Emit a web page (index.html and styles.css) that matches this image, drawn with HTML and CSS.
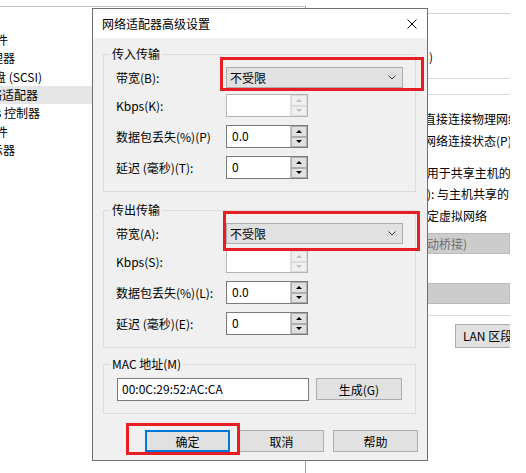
FILE: index.html
```html
<!DOCTYPE html>
<html lang="zh-CN">
<head>
  <meta charset="UTF-8" />
  <title>网络适配器高级设置</title>
  <link rel="stylesheet" href="styles.css">
</head>
<body>
  <div class="app">
    <div class="tree-pane">
      <div class="tree-row end-8"><span>文件</span></div>
      <div class="tree-row end-15"><span>处理器</span></div>
      <div class="tree-row end-42"><span>硬盘 (SCSI)</span></div>
      <div class="tree-row end-38 is-selected"><span>网络适配器</span></div>
      <div class="tree-row end-40"><i class="usb-icon"></i><span>USB 控制器</span></div>
      <div class="tree-row end-8"><span>软件</span></div>
      <div class="tree-row end-15"><span>显示器</span></div>
    </div>

    <div class="settings-pane">
      <div class="pane-text first">)</div>
      <div class="pane-line line-a"></div>
      <div class="pane-line line-b"></div>
      <div class="pane-text t-bridge">直接连接物理网络</div>
      <div class="pane-text t-state">网络连接状态(P)</div>
      <div class="pane-text t-nat">&nbsp;用于共享主机的</div>
      <div class="pane-text t-host">): 与主机共享的</div>
      <div class="pane-text t-custom">定虚拟网络</div>
      <div class="pane-combo">动桥接)</div>
      <div class="pane-combo empty"></div>
      <div class="pane-line line-c"></div>
      <div class="pane-btn">LAN 区段(L)...</div>
    </div>
  </div>

  <div class="dialog">
    <div class="titlebar">
      <span>网络适配器高级设置</span>
      <svg class="close" width="10" height="10" viewBox="0 0 10 10">
        <path d="M0.5 0.5 L9.5 9.5 M9.5 0.5 L0.5 9.5" stroke="#000" stroke-width="1" fill="none"/>
      </svg>
    </div>

    <div class="dialog-body">
      <fieldset class="group">
        <legend>传入传输</legend>
        <div class="field field-combo">
          <label>带宽(B):</label>
          <div class="combo"><span>不受限</span>
            <svg width="8" height="5" viewBox="0 0 8 5"><path d="M0.5 0.5 L4 4 L7.5 0.5" stroke="#333" fill="none"/></svg>
          </div>
        </div>
        <div class="field">
          <label>Kbps(K):</label>
          <div class="spin is-disabled">
            <div class="spin-input"></div>
            <div class="spin-btns"><div class="spin-btn"><i class="arr-up"></i></div><div class="spin-btn"><i class="arr-down"></i></div></div>
          </div>
        </div>
        <div class="field">
          <label>数据包丢失(%)(P)</label>
          <div class="spin">
            <div class="spin-input">0.0</div>
            <div class="spin-btns"><div class="spin-btn"><i class="arr-up"></i></div><div class="spin-btn"><i class="arr-down"></i></div></div>
          </div>
        </div>
        <div class="field">
          <label>延迟 (毫秒)(T):</label>
          <div class="spin">
            <div class="spin-input">0</div>
            <div class="spin-btns"><div class="spin-btn"><i class="arr-up"></i></div><div class="spin-btn"><i class="arr-down"></i></div></div>
          </div>
        </div>
      </fieldset>

      <fieldset class="group group-out">
        <legend>传出传输</legend>
        <div class="field field-combo">
          <label>带宽(A):</label>
          <div class="combo"><span>不受限</span>
            <svg width="8" height="5" viewBox="0 0 8 5"><path d="M0.5 0.5 L4 4 L7.5 0.5" stroke="#333" fill="none"/></svg>
          </div>
        </div>
        <div class="field">
          <label>Kbps(S):</label>
          <div class="spin is-disabled">
            <div class="spin-input"></div>
            <div class="spin-btns"><div class="spin-btn"><i class="arr-up"></i></div><div class="spin-btn"><i class="arr-down"></i></div></div>
          </div>
        </div>
        <div class="field">
          <label>数据包丢失(%)(L):</label>
          <div class="spin">
            <div class="spin-input">0.0</div>
            <div class="spin-btns"><div class="spin-btn"><i class="arr-up"></i></div><div class="spin-btn"><i class="arr-down"></i></div></div>
          </div>
        </div>
        <div class="field">
          <label>延迟 (毫秒)(E):</label>
          <div class="spin">
            <div class="spin-input">0</div>
            <div class="spin-btns"><div class="spin-btn"><i class="arr-up"></i></div><div class="spin-btn"><i class="arr-down"></i></div></div>
          </div>
        </div>
      </fieldset>

      <fieldset class="group group-mac">
        <legend>MAC 地址(M)</legend>
        <div class="mac-row">
          <div class="mac-input">00:0C:29:52:AC:CA</div>
          <button class="btn btn-gen">生成(G)</button>
        </div>
      </fieldset>
    </div>

    <div class="dialog-buttons">
      <button class="btn btn-default">确定</button>
      <button class="btn">取消</button>
      <button class="btn">帮助</button>
    </div>
  </div>

  <div class="mark mark-in"></div>
  <div class="mark mark-out"></div>
  <div class="mark mark-ok"></div>
</body>
</html>
```

FILE: styles.css
```css
body {
  margin: 0;
  width: 526px;
  height: 473px;
  overflow: hidden;
  position: relative;
  background: #fff;
  color: #000;
  font-family: "Noto Sans CJK SC", "Liberation Sans", sans-serif;
  font-size: 12px;
  line-height: 16px;
}

/* background window */

.app {
  display: flex;
  height: 473px;
}

.tree-pane {
  width: 305px;
  margin-top: 6px;
  padding-top: 24px;
  border-top: 1px solid #c4c4c4;
  border-right: 1px solid #a0a0a0;
  overflow: hidden;
}

.tree-row {
  display: flex;
  justify-content: flex-end;
  align-items: center;
  height: 18.3px;
  white-space: nowrap;
}

.tree-row.is-selected {
  width: 305px !important;
  justify-content: flex-start;
  background: #e5e5e5;
}

.tree-row.is-selected span {
  margin-left: -22px;
}

.end-8 { width: 8px; }
.end-15 { width: 15px; }
.end-38 { width: 38px; }
.end-40 { width: 40px; }
.end-42 { width: 42px; }

.usb-icon {
  flex: none;
  width: 10px;
  height: 10px;
  margin-right: 2px;
  background: #3b9ee8;
  border-radius: 2px;
}

.settings-pane {
  width: 204px;
  margin-top: 13px;
  padding-left: 118px;
  box-sizing: border-box;
  border-top: 1px solid #d0d0d0;
  overflow: hidden;
}

.pane-text {
  white-space: nowrap;
  height: 16px;
}

.pane-text.first { margin-top: 35px; padding-left: 5px; }
.pane-line { height: 1px; background: #d9d9d9; }
.line-a { margin-top: 13px; }
.line-b { margin-top: 15px; }
.t-bridge { margin-top: 16px; }
.t-state { margin-top: 6px; }
.t-nat { margin-top: 16px; }
.t-host { margin-top: 5px; padding-left: 3px; }
.t-custom { margin-top: 6px; padding-left: 3px; }

.pane-combo {
  height: 21px;
  margin-top: 9px;
  padding-left: 2px;
  box-sizing: border-box;
  background: #cccccc;
  border: 1px solid #bcbcbc;
  color: #6d6d6d;
  white-space: nowrap;
  line-height: 19px;
}

.pane-combo.empty { margin-top: 29px; }
.line-c { margin-top: 11px; }

.pane-btn {
  margin: 8px 0 0 31px;
  height: 24px;
  padding-left: 7px;
  box-sizing: border-box;
  background: #e1e1e1;
  border: 1px solid #adadad;
  border-right: none;
  line-height: 22px;
  white-space: nowrap;
}

/* dialog */

.dialog {
  position: absolute;
  left: 92px;
  top: 8px;
  width: 336px;
  height: 453px;
  box-sizing: border-box;
  border: 1px solid #6f6f6f;
  background: #f0f0f0;
}

.titlebar {
  height: 29px;
  background: #fff;
  display: flex;
  align-items: center;
  justify-content: space-between;
  padding: 0 10px 0 9px;
}

.dialog-body {
  padding: 8px 0 0 10px;
}

.group {
  width: 313px;
  box-sizing: border-box;
  margin: 0;
  padding: 5px 11px 12px 12px;
  border: 1px solid #dcdcdc;
  min-width: 0;
}

.group legend {
  padding: 0 2px;
  margin-left: -6px;
  line-height: 16px;
}

.group-out { margin-top: 10px; }
.group-mac { margin-top: 8px; padding-top: 6px; }

.field {
  display: flex;
  align-items: center;
  height: 23px;
  margin-top: 8px;
}

.field-combo {
  height: 21px;
  margin-top: 0;
  margin-bottom: -2px;
}

.field label {
  width: 110px;
  flex: none;
  white-space: nowrap;
}

.combo {
  width: 177px;
  height: 21px;
  box-sizing: border-box;
  border: 1px solid #adadad;
  background: #e1e1e1;
  display: flex;
  align-items: center;
  justify-content: space-between;
  padding: 0 6px 0 3px;
}

.spin {
  display: flex;
  width: 82px;
  height: 23px;
  box-sizing: border-box;
  border: 1px solid #7a7a7a;
  background: #fff;
}

.spin-input {
  flex: 1;
  padding-left: 5px;
  line-height: 19px;
}

.spin-btns {
  width: 16px;
  display: flex;
  flex-direction: column;
  border-left: 1px solid #c8c8c8;
}

.spin-btn {
  flex: 1;
  display: flex;
  align-items: center;
  justify-content: center;
  background: #e1e1e1;
  border: 1px solid #adadad;
}

.arr-up, .arr-down {
  width: 0;
  height: 0;
  border-left: 3px solid transparent;
  border-right: 3px solid transparent;
}

.arr-up { border-bottom: 3px solid #000; }
.arr-down { border-top: 3px solid #000; }

.spin.is-disabled { border-color: #b4b4b4; }
.spin.is-disabled .spin-btns { border-left-color: #e0e0e0; }
.spin.is-disabled .spin-btn { background: #f0f0f0; border-color: #dcdcdc; }
.spin.is-disabled .arr-up { border-bottom-color: #bfbfbf; }
.spin.is-disabled .arr-down { border-top-color: #bfbfbf; }

.mac-row {
  display: flex;
  align-items: flex-start;
}

.mac-input {
  width: 192px;
  height: 23px;
  box-sizing: border-box;
  margin-left: 1px;
  padding-left: 4px;
  border: 1px solid #7a7a7a;
  background: #fff;
  line-height: 19px;
}

.btn {
  width: 85px;
  height: 22px;
  box-sizing: border-box;
  border: 1px solid #adadad;
  background: #e1e1e1;
  font-family: inherit;
  font-size: 12px;
  color: #000;
  padding: 0;
}

.btn-gen {
  width: 86px;
  margin-left: 7px;
}

.btn-default {
  border: 2px solid #0078d7;
}

.dialog-buttons {
  display: flex;
  justify-content: flex-end;
  gap: 9px;
  padding-right: 9px;
  margin-top: 16px;
}

/* red annotation boxes */

.mark {
  position: absolute;
  box-sizing: border-box;
  border: 3px solid #e81e25;
}

.mark-in { left: 220px; top: 57px; width: 204px; height: 34px; }
.mark-out { left: 223px; top: 211px; width: 197px; height: 40px; }
.mark-ok { left: 126px; top: 423px; width: 114px; height: 32px; }
```
